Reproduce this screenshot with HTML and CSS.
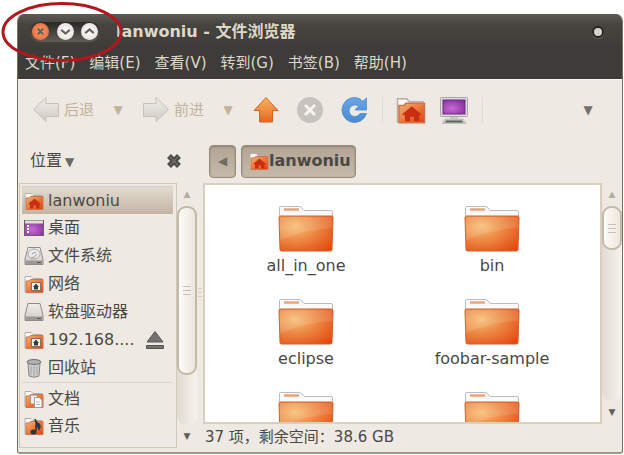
FILE: index.html
```html
<!DOCTYPE html>
<html lang="zh-CN">
<head>
<meta charset="utf-8">
<title>lanwoniu - 文件浏览器</title>
<link rel="stylesheet" href="styles.css">
</head>
<body>
<svg class="defs" aria-hidden="true">
  <defs>
    <linearGradient id="g-orange" x1="0" y1="0" x2="1" y2="1"><stop offset="0" stop-color="#f2b27a"/><stop offset=".5" stop-color="#ed7a3a"/><stop offset="1" stop-color="#e23f0c"/></linearGradient>
    <radialGradient id="g-folder" cx=".3" cy=".3" r=".9"><stop offset="0" stop-color="#f7bd74"/><stop offset=".45" stop-color="#ec8843"/><stop offset="1" stop-color="#e4480f"/></radialGradient>
    <linearGradient id="g-up" x1="0" y1="0" x2="0" y2="1"><stop offset="0" stop-color="#fbb45f"/><stop offset="1" stop-color="#ea6420"/></linearGradient>
    <linearGradient id="g-gray" x1="0" y1="0" x2="0" y2="1"><stop offset="0" stop-color="#f0eeea"/><stop offset="1" stop-color="#cfcbc4"/></linearGradient>
    <radialGradient id="g-purple" cx=".4" cy=".6" r=".8"><stop offset="0" stop-color="#c76bd4"/><stop offset="1" stop-color="#7c2b93"/></radialGradient>
    <linearGradient id="g-blue" x1="0" y1="0" x2="0" y2="1"><stop offset="0" stop-color="#6ba6e2"/><stop offset="1" stop-color="#4a8ad0"/></linearGradient>
    <symbol id="folder" viewBox="0 0 56 47">
      <path d="M1.500 12V2.500Q1.500 1.500 2.500 1.500H21Q23 1.500 24 3L26 5.500H53Q54.500 5.500 54.500 7V14H1.500z" fill="#fbfafa" stroke="#bcbcc2"/>
      <path d="M6 4.500H21" stroke="#eba57b" stroke-width="2.500"/>
      <path d="M1 12.500Q1 11 2.500 11H53.500Q55 11 55 12.500L54 44.500Q54 46 52.500 46H3.500Q2 46 2 44.500z" fill="url(#g-folder)" stroke="#d4602f"/>
      <path d="M2 12H54V23Q30 24 2 35z" fill="#fff" opacity=".12"/>
    </symbol>
    <symbol id="mini" viewBox="0 0 20 20">
      <path d="M1 18V2.500H7L9 4.500H18V18z" fill="#fbf8f5" stroke="#b9aea5"/>
      <path d="M2 18.500V7H5.500L6.500 5.500H19V18.500z" fill="url(#g-orange)" stroke="#cc7452"/>
    </symbol>
    <symbol id="homef" viewBox="0 0 20 20">
      <use href="#mini"/>
      <path d="M4 13L10.500 7.500L17 13L15.500 13.500V17.500H12V14.500H9.500V17.500H6V13.500z" fill="#c62f12"/>
    </symbol>
    <symbol id="netf" viewBox="0 0 20 20">
      <use href="#mini"/>
      <rect x="7.500" y="8.500" width="9" height="8" fill="#eef3f2" stroke="#8d6f60"/>
      <path d="M12 9.500L15 13H14V15.500H10V13H9z" fill="#30403e"/>
    </symbol>
    <symbol id="drive" viewBox="0 0 20 20">
      <path d="M4 1.500H16L19 13V18.500H1V13z" fill="url(#g-gray)" stroke="#8d8b88"/>
      <path d="M1.500 14.500H18.500V18H1.500z" fill="#9b9997"/><path d="M13 16.500H17" stroke="#555"/>
    </symbol>
  </defs>
</svg>

<div class="window">
  <header class="titlebar">
    <div class="controls">
      <button class="ctl close" aria-label="关闭"><svg viewBox="0 0 16 16"><path d="M5.500 5.500L10.500 10.500M10.500 5.500L5.500 10.500"/></svg></button>
      <button class="ctl" aria-label="最小化"><svg viewBox="0 0 16 16"><path d="M4 6.500L8 10L12 6.500"/></svg></button>
      <button class="ctl" aria-label="最大化"><svg viewBox="0 0 16 16"><path d="M4 9.500L8 6L12 9.500"/></svg></button>
    </div>
    <h1>lanwoniu - 文件浏览器</h1>
    <span class="dot"></span>
  </header>
  <nav class="menubar">
    <button>文件(F)</button><button>编辑(E)</button><button>查看(V)</button><button>转到(G)</button><button>书签(B)</button><button>帮助(H)</button>
  </nav>

  <div class="toolbar">
    <button class="tool faded" disabled><svg class="i28" viewBox="0 0 28 28"><path d="M1.500 13.500L14 1.500V7.500H26.500V20.500H14V25.500z" fill="url(#g-gray)" stroke="#c6c1ba"/></svg>后退</button>
    <button class="drop faded" disabled aria-label="后退历史">▼</button>
    <button class="tool faded" disabled><svg class="i28" viewBox="0 0 28 28"><path d="M26.500 13.500L14 1.500V7.500H1.500V20.500H14V25.500z" fill="url(#g-gray)" stroke="#c6c1ba"/></svg>前进</button>
    <button class="drop faded" disabled aria-label="前进历史">▼</button>
    <div class="icons">
      <button aria-label="向上"><svg class="i28" viewBox="0 0 28 28"><path d="M14 1.500L26 14.500H20.500V26H7.500V14.500H2z" fill="url(#g-up)" stroke="#d5652b"/></svg></button>
      <button aria-label="停止" disabled><svg class="i28" viewBox="0 0 28 28"><circle cx="14" cy="14" r="13" fill="#c6c3be"/><path d="M9 9L19 19M19 9L9 19" stroke="#f6f4f0" stroke-width="3"/></svg></button>
      <button aria-label="刷新"><svg class="i28" viewBox="0 0 28 28"><path d="M20.500 4.500L23 5L26.500 2V14H15L18.500 10.200A5.800 5.800 0 1 0 20 17.500H26.500A12.500 12.500 0 1 1 20.500 3z" fill="url(#g-blue)" stroke="#4d8bcd" stroke-width=".8"/></svg></button>
    </div>
    <div class="icons places">
      <button aria-label="主文件夹"><svg class="i30" viewBox="0 0 20 20"><use href="#homef"/></svg></button>
      <button aria-label="计算机"><svg class="i28" viewBox="0 0 28 28"><rect x=".5" y="1.500" width="27" height="19" rx="1" fill="#dedbdf" stroke="#aaa6ac"/><rect x="3" y="4" width="22" height="14" fill="url(#g-purple)" stroke="#6d2a80"/><path d="M10 21H18V23H10z" fill="#cdcbc8"/><path d="M5 23H23L26 27.500H2z" fill="#c9cac5" stroke="#a4a5a0" stroke-width=".5"/><path d="M6 24.500H22L23 26.500H5z" fill="#59635b"/></svg></button>
    </div>
    <button class="drop overflow" aria-label="更多">▼</button>
  </div>

  <div class="main">
    <div class="sidehead"><button>位置<span>▼</span></button>
      <button class="x" aria-label="关闭侧栏"><svg viewBox="0 0 18 18"><path d="M4 4L14 14M14 4L4 14" stroke="#4b4b49" stroke-width="5.500"/><path d="M5 5L13 13M13 5L5 13" stroke="#77746f" stroke-width="1.500" stroke-dasharray="2 1"/></svg></button>
    </div>
    <div class="pathbar"><button class="prev" aria-label="上一级">◀</button><button class="crumb"><svg class="i20"><use href="#homef"/></svg>lanwoniu</button></div>

    <aside class="side">
      <ul class="list">
        <li class="on"><svg class="i20"><use href="#homef"/></svg>lanwoniu</li>
        <li><svg class="i20" viewBox="0 0 20 20"><rect x=".5" y="2.500" width="19" height="15" fill="url(#g-purple)" stroke="#6e5968"/><path d="M1 4H19" stroke="#e0ddd4" stroke-width="3"/><path d="M3 8H5M3 11H5M3 14H5" stroke="#fff" stroke-width="2"/></svg>桌面</li>
        <li><svg class="i20" viewBox="0 0 20 20"><use href="#drive"/><ellipse cx="10" cy="8" rx="6" ry="5" fill="#e9eaeb" stroke="#aaa"/><path d="M8 8L12 6M7 12Q11 12 13 8" stroke="#999" fill="none"/></svg>文件系统</li>
        <li><svg class="i20"><use href="#netf"/></svg>网络</li>
        <li><svg class="i20"><use href="#drive"/></svg>软盘驱动器</li>
        <li><svg class="i20"><use href="#netf"/></svg>192.168....<button class="eject" aria-label="弹出"><svg viewBox="0 0 18 20"><path d="M9 1.500L17 12H1z" fill="#74726f" stroke="#555"/><path d="M.5 15.500H17.500V18.500H.5z" fill="#74726f" stroke="#555"/></svg></button></li>
        <li><svg class="i20" viewBox="0 0 20 20"><path d="M4 5H16L15 18Q10 20.500 5 18z" fill="#cfcfcd" stroke="#858583"/><path d="M7 8V17M10 8V18M13 8V17" stroke="#a3a3a1"/><ellipse cx="10" cy="4" rx="7" ry="2.500" fill="#aeb0b0" stroke="#6f7171"/></svg>回收站</li>
        <li class="new"><svg class="i20" viewBox="0 0 20 20"><use href="#mini"/><path d="M6.500 6H12L14 8V15H6.500z" fill="#f6f1ed" stroke="#a98f82"/><path d="M10.500 8.500H15L18 11V18.500H10.500z" fill="#fff" stroke="#9a9a9a"/><path d="M12 13H16M12 15.500H16" stroke="#bbb"/></svg>文档</li>
        <li><svg class="i20" viewBox="0 0 20 20"><use href="#mini"/><path d="M11 3Q12 7 15 8Q17 10 15 13Q14 10 12 10V15" fill="#333" stroke="#303438" stroke-width="1.500"/><ellipse cx="9.500" cy="16" rx="3" ry="2.500" fill="#303438"/></svg>音乐</li>
      </ul>
      <div class="scroll"><i class="up">▲</i><div class="trough"><div class="thumb long"></div></div><i>▼</i></div>
    </aside>

    <div class="splitter"></div>

    <section class="content">
      <div class="view">
        <div class="files">
          <figure><svg><use href="#folder"/></svg><figcaption>all_in_one</figcaption></figure>
          <figure><svg><use href="#folder"/></svg><figcaption>bin</figcaption></figure>
          <figure><svg><use href="#folder"/></svg><figcaption>eclipse</figcaption></figure>
          <figure><svg><use href="#folder"/></svg><figcaption>foobar-sample</figcaption></figure>
          <figure><svg><use href="#folder"/></svg></figure>
          <figure><svg><use href="#folder"/></svg></figure>
        </div>
        <div class="scroll"><i class="up">▲</i><div class="trough"><div class="thumb short"></div></div><i>▼</i></div>
      </div>
      <footer>37 项，剩余空间：38.6 GB</footer>
    </section>
  </div>
</div>
<svg class="mark" viewBox="0 0 124 64" aria-hidden="true"><ellipse cx="62" cy="32" rx="59" ry="28.500" fill="none" stroke="#b3161d" stroke-width="3"/></svg>
</body>
</html>
```
FILE: styles.css
```css
* { box-sizing: border-box; }
body {
  margin: 0;
  height: 100vh;
  padding: 14px 1px 1px 17px;
  background: #fff;
  color: #4a4845;
  font: 16px/20px "DejaVu Sans", "Noto Sans CJK SC", sans-serif;
}
button { margin: 0; padding: 0; border: 0; background: none; color: inherit; font: inherit; }
svg { display: block; flex: none; }
.defs { position: absolute; width: 0; height: 0; }
.i20 { width: 20px; height: 20px; }
.i28 { width: 28px; height: 28px; }
.i30 { width: 30px; height: 30px; }

.window {
  display: flex;
  flex-direction: column;
  height: 100%;
  border: 1px solid #77705f;
  border-top: 0;
  border-bottom: 2px solid #a39885;
  border-radius: 7px 7px 3px 3px;
  background: #eeeae3;
  overflow: hidden;
}

.titlebar {
  display: flex;
  align-items: center;
  height: 35px;
  padding: 0 18px 0 12px;
  background: linear-gradient(#5d5b54, #45443f 30%, #3d3c38);
  color: #dfd8c8;
}
.titlebar h1 { flex: 1; margin: 0 0 0 16px; font-size: 16px; line-height: 20px; }
.controls {
  display: flex;
  align-items: center;
  justify-content: space-between;
  width: 70px;
  height: 20px;
  padding: 0 2px;
  border-radius: 10px;
  background: linear-gradient(#292825, #5f5d57);
}
.ctl { width: 17px; height: 17px; border-radius: 50%; background: radial-gradient(#fff, #dcd9d2); }
.ctl.close { background: radial-gradient(#f59a6d, #e8632f); }
.ctl path { fill: none; stroke: #66635d; stroke-width: 2; }
.dot { width: 12px; height: 12px; border: 2px solid #252422; border-radius: 50%; background: #d6d3ce; box-shadow: 0 1px 0 #66645e; }
.menubar {
  display: flex;
  gap: 14px;
  height: 30px;
  padding: 0 7px;
  background: #3d3c38;
  color: #dfd8c8;
  font-size: 15px;
}
.menubar button { height: 28px; }

.toolbar { display: flex; align-items: center; height: 60px; padding: 0 28px 0 14px; border-top: 1px solid #faf7f2; }
.tool { display: flex; align-items: center; gap: 4px; font-size: 15px; }
.drop { width: 12px; margin: 0 18px; font-size: 12px; color: #73706b; }
.faded { color: #c2b299; }
.icons { display: flex; align-items: center; gap: 16px; }
.places { height: 26px; margin-left: 14px; padding: 0 14px 0 13px; gap: 14px; border: solid #e0dad0; border-width: 0 1px; }
.overflow { margin: 0 0 0 auto; }

.main {
  flex: 1;
  min-height: 0;
  display: grid;
  grid-template: 44px 1fr / 179px 6px 1fr;
}
.sidehead { display: flex; align-items: center; justify-content: space-between; padding: 0 14px 0 12px; }
.sidehead span { margin-left: 3px; font-size: 12px; color: #6b6864; }
.x svg { width: 18px; height: 18px; }
.pathbar { grid-column: 2 / -1; display: flex; align-items: center; gap: 5px; padding: 0 12px; }
.pathbar button {
  height: 33px;
  border: 1px solid #968a7a;
  border-radius: 4px;
  background: linear-gradient(#b3a594, #c5b9a9);
  box-shadow: inset 0 1px 2px #8f8373;
}
.pathbar .prev { width: 27px; font-size: 12px; color: #716b62; }
.pathbar .crumb { display: flex; align-items: center; padding: 0 4px 0 7px; font-weight: bold; }

.side { display: flex; min-height: 0; padding: 0 0 4px 1px; }
.list {
  flex: 1;
  margin: 0;
  padding: 2px 3px 2px 2px;
  list-style: none;
  border: 1px solid #d2c8b9;
  overflow: hidden;
}
.list li { display: flex; align-items: center; gap: 4px; height: 28px; padding-left: 2px; }
.list .on { border-top: 1px solid #d8cfc2; background: linear-gradient(#e3dbd0, #c3b5a3); }
.list .new { height: 30px; padding-top: 2px; border-top: 1px solid #ddd6ca; }
.eject { margin: 0 9px 0 auto; }
.eject svg { width: 18px; height: 20px; }

.splitter { display: flex; align-items: center; justify-content: center; padding-bottom: 50px; }
.splitter::after { content: ""; width: 4px; height: 9px; background: repeating-linear-gradient(#d8d1c6 0 1px, transparent 1px 4px); }

.scroll { display: flex; flex-direction: column; width: 20px; }
.scroll i { height: 23px; font: 9px/23px "DejaVu Sans", sans-serif; text-align: center; color: #615e59; }
.scroll .up { color: #b3ada3; }
.trough { flex: 1; border-radius: 9px; background: linear-gradient(90deg, #e1dbd1, #f5f2ed); }
.thumb {
  display: flex;
  align-items: center;
  justify-content: center;
  border: 2px solid #c3b9a9;
  border-radius: 9px;
  background: linear-gradient(90deg, #fdfcfa, #ece6dc);
}
.thumb::after { content: ""; width: 8px; height: 9px; background: repeating-linear-gradient(#c8c0b4 0 1px, transparent 1px 4px); }
.long { height: 77%; }
.short { height: 22%; min-height: 44px; }

.content { display: flex; flex-direction: column; min-width: 0; min-height: 0; }
.view { flex: 1; display: flex; min-height: 0; }
.files {
  flex: 1;
  display: grid;
  grid-template-columns: 186px 186px;
  grid-auto-rows: 93px;
  padding: 20px 8px 0;
  border: 2px solid #d9cfc1;
  background: #fff;
  overflow: hidden;
}
figure { display: flex; flex-direction: column; align-items: center; gap: 4px; margin: 0; }
figure svg { width: 56px; height: 47px; }
footer { height: 28px; padding: 3px 2px; font-size: 15px; }

.mark { position: absolute; left: 0; top: 0; width: 124px; height: 64px; }
```
